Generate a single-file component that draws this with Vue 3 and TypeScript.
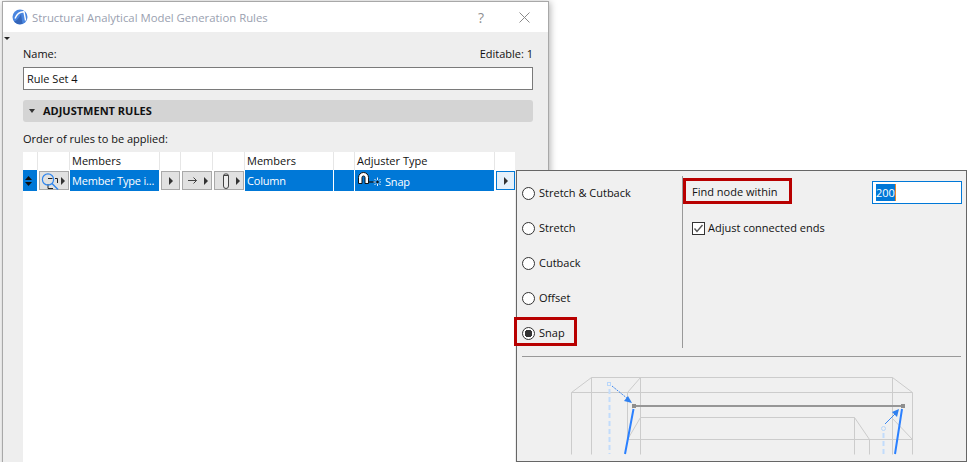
<script setup lang="ts">
const radios: { label: string; on?: boolean }[] = [
  { label: 'Stretch & Cutback' },
  { label: 'Stretch' },
  { label: 'Cutback' },
  { label: 'Offset' },
  { label: 'Snap', on: true },
]
// wireframe lines of the diagram, in diagram coordinates (origin = popup inner corner 517,357)
const ox = 517
const oy = 357
const wire: number[][] = [
  [571, 392, 571, 454], [591, 377, 591, 454], [640, 377, 640, 454], [627, 392, 627, 440],
  [591, 377, 892, 377], [571, 392, 912, 392], [640, 417, 854, 417], [627, 439, 912, 439],
  [571, 392, 591, 377], [627, 392, 640, 377], [627, 439, 640, 417],
  [892, 377, 892, 454], [912, 392, 912, 454], [854, 417, 854, 454], [869, 439, 869, 454],
  [892, 377, 912, 392], [854, 417, 869, 439], [892, 418, 912, 439],
].map(([a, b, c, d]) => [a - ox + 0.5, b - oy + 0.5, c - ox + 0.5, d - oy + 0.5])
</script>

<template>
  <div class="stage">
    <section class="dialog">
      <header class="titlebar">
        <svg class="logo" width="16" height="16" viewBox="0 0 16 16">
          <circle cx="8" cy="8" r="7.5" fill="#4a86e0" />
          <path d="M2 12.5 Q6 11.5 9 5 L10.5 14.8 Q5.5 16.2 2 12.5Z" fill="#3565b8" />
          <path d="M3 9.5 Q6 2.5 12 2.8 L13.6 11.5" fill="none" stroke="#fff" stroke-width="1.4" />
        </svg>
        <span class="title">Structural Analytical Model Generation Rules</span>
        <span class="help">?</span>
        <svg class="close" width="11" height="11" viewBox="0 0 11 11">
          <path d="M0.5 0.5L10.5 10.5M10.5 0.5L0.5 10.5" stroke="#8a8a8a" fill="none" />
        </svg>
      </header>
      <div class="body">
        <i class="corner"></i>
        <div class="name-row"><span>Name:</span><span>Editable: 1</span></div>
        <div class="name-input">Rule Set 4</div>
        <div class="section"><i class="tri-down"></i><b>ADJUSTMENT RULES</b></div>
        <div class="order">Order of rules to be applied:</div>
        <div class="table">
          <div class="grid head">
            <div></div><div></div><div class="h">Members</div><div></div><div></div><div></div>
            <div class="h">Members</div><div></div><div class="h">Adjuster Type</div><div></div>
          </div>
          <div class="grid row">
            <div class="blue sort">
              <svg width="7" height="10" viewBox="0 0 7 10"><path d="M3.5 0L7 4H0ZM0 6H7L3.5 10Z" fill="#111" /></svg>
            </div>
            <button class="btn">
              <svg width="22" height="19" viewBox="0 0 22 19">
                <path d="M8 6.5H12.5M15 6.5H17.5V11M8 16.5H13M8 12V16.5" fill="none" stroke="#222" />
                <circle cx="8" cy="7.5" r="5.6" fill="none" stroke="#2f86ee" stroke-width="1.2" />
                <path d="M12 11.5L18 17.5" stroke="#2f86ee" stroke-width="1.4" />
              </svg>
              <i class="tri"></i>
            </button>
            <div class="blue cell">Member Type i...</div>
            <button class="btn center"><i class="tri"></i></button>
            <button class="btn">
              <svg class="gl" width="10" height="7" viewBox="0 0 10 7"><path d="M0 3.5H8.5M5.5 0.5L8.5 3.5L5.5 6.5" fill="none" stroke="#444" /></svg>
              <i class="tri"></i>
            </button>
            <button class="btn">
              <svg class="gc" width="8" height="16" viewBox="0 0 8 16"><path d="M1.5 2.5H6.5V13A2.5 2.5 0 0 1 1.5 13ZM1.5 2.5A2.5 1.6 0 0 1 6.5 2.5" fill="#eee" stroke="#444" /></svg>
              <i class="tri"></i>
            </button>
            <div class="blue cell">Column</div>
            <div class="blue"></div>
            <div class="blue cell adj">
              <svg width="24" height="17" viewBox="0 0 24 17">
                <path d="M1.5 11.5V5.5A5 5 0 0 1 11.5 5.5V11.5H8V5.5A1.5 1.5 0 0 0 5 5.5V11.5Z" fill="#fff" stroke="#111" />
                <path d="M12 10H18" stroke="#111" stroke-width="1.2" />
                <path d="M20.5 5.5V8M20.5 11.5V14M16.5 10H18.5M22.5 10H24M17.5 7L19 8.5M23.5 7L22 8.5M17.5 13L19 11.5M23.5 13L22 11.5" stroke="#e8eef8" />
                <circle cx="20.5" cy="10" r="1.2" fill="#111" />
              </svg>
              <span>Snap</span>
            </div>
            <button class="btn active center"><i class="tri"></i></button>
          </div>
        </div>
      </div>
    </section>

    <aside class="popup">
      <div class="top">
        <div class="left">
          <label v-for="r in radios" :key="r.label" class="radio">
            <i class="dot" :class="{ on: r.on }"></i>
            <span class="lbl">{{ r.label }}</span>
            <i v-if="r.on" class="mark"></i>
          </label>
        </div>
        <div class="right">
          <div class="find-row">
            <span class="find">Find node within</span>
            <div class="num"><span class="sel">200</span></div>
          </div>
          <div class="check-row">
            <svg width="13" height="13" viewBox="0 0 13 13">
              <rect x="0.5" y="0.5" width="12" height="12" fill="#fff" stroke="#333" />
              <path d="M2.5 6.5L5 9.5L10.5 3" fill="none" stroke="#555" stroke-width="1.4" />
            </svg>
            <span class="lbl">Adjust connected ends</span>
          </div>
        </div>
      </div>
      <div class="rule"></div>
      <svg class="diagram" width="449" height="104" viewBox="0 0 449 104">
        <line v-for="(l, i) in wire" :key="i" :x1="l[0]" :y1="l[1]" :x2="l[2]" :y2="l[3]" stroke="#cccccc" />
        <path d="M92.5 32V97M366.5 76V97" stroke="#c2dcfb" stroke-width="2" stroke-dasharray="5 3" fill="none" />
        <rect x="90.5" y="25.5" width="3" height="3" fill="#f0f0f0" stroke="#b8d6fa" />
        <circle cx="366.5" cy="71.5" r="2" fill="#f0f0f0" stroke="#b8d6fa" />
        <path d="M95 29L111 42" stroke="#3b87f0" stroke-dasharray="2 1" />
        <path d="M115 46L107 44L111 39Z" fill="#2f80f0" />
        <path d="M368 67L379 56" stroke="#3b87f0" />
        <path d="M382 52L380 60L375 55Z" fill="#2f80f0" />
        <path d="M117 49H386" stroke="#969696" stroke-width="2" />
        <rect x="115" y="47" width="4" height="4" fill="#8e8e8e" />
        <rect x="384" y="47" width="4" height="4" fill="#8e8e8e" />
        <path d="M116.5 52L108 97M385 52L378 97" stroke="#2b80ff" stroke-width="2" fill="none" />
      </svg>
    </aside>
  </div>
</template>

<style>
html, body { margin: 0; background: #fff; }
</style>

<style scoped>
.stage {
  position: relative;
  width: 971px;
  height: 462px;
  overflow: hidden;
  background: #fff;
  font-family: "Open Sans", "Noto Sans", sans-serif;
  font-size: 11px;
  color: #111;
}
.dialog {
  position: absolute;
  left: 2px;
  top: 1px;
  width: 547px;
  height: 470px;
  box-sizing: border-box;
  border: 1px solid #a8a8a8;
  background: #eee;
  box-shadow: 1px 1px 7px rgba(0, 0, 0, 0.32);
}
.titlebar {
  display: flex;
  align-items: center;
  height: 30px;
  background: #fff;
}
.logo { margin-left: 9px; }
.title { margin-left: 4px; color: #9a9fb0; font-size: 11.35px; }
.help { margin-left: auto; color: #8f8f8f; font-size: 14px; }
.close { margin: 0 18px 0 35px; }
.body { position: relative; padding: 0 15px 0 20px; }
.corner {
  position: absolute;
  left: 1px;
  top: 5px;
  border: 3px solid transparent;
  border-top: 3px solid #222;
  border-bottom: 0;
}
.name-row {
  display: flex;
  justify-content: space-between;
  height: 35px;
  line-height: 44px;
}
.name-input {
  box-sizing: border-box;
  height: 23px;
  line-height: 21px;
  padding-left: 3px;
  border: 1px solid #7a7a7a;
  background: #fff;
}
.section {
  display: flex;
  align-items: center;
  height: 22px;
  margin-top: 10px;
  padding-left: 6px;
  background: #d4d4d4;
  border-radius: 3px;
}
.section b { margin: 0 0 2px 8px; font-weight: 700; }
.tri-down {
  width: 0;
  height: 0;
  border: 3.5px solid transparent;
  border-top: 4px solid #333;
  border-bottom: 0;
}
.order { height: 30px; line-height: 34px; }
.table {
  width: 492px;
  height: 320px;
  background: #fff;
}
.grid {
  display: grid;
  grid-template-columns: 14px 31px 89px 20px 31px 31px 88px 20px 139px 20px;
  column-gap: 1px;
}
.head { height: 18px; background: #e6e6e6; }
.head > div { background: #fff; }
.h { padding-left: 2px; line-height: 18px; }
.row { height: 21px; column-gap: 1px; }
.blue { background: #0078d7; color: #fff; }
.sort { display: flex; align-items: center; justify-content: center; padding-right: 3px; }
.cell {
  padding-left: 2px;
  line-height: 22px;
  font-weight: 500;
  letter-spacing: -0.2px;
  white-space: nowrap;
  overflow: hidden;
}
.adj { display: flex; align-items: center; padding-left: 2px; }
.adj span { margin: 2px 0 0 4px; }
.btn {
  display: flex;
  align-items: center;
  justify-content: flex-end;
  box-sizing: border-box;
  margin: 1px 0 1px 1px;
  padding: 0 3px 0 0;
  border: 1px solid #a9a9a9;
  background: #e1e1e1;
  position: relative;
}
.btn.center { justify-content: center; padding: 0; }
.btn.active { background: #e5f1fb; border-color: #0078d7; }
.btn > svg { position: absolute; left: 0; top: 0; }
.btn > .gl { left: 5px; top: 5px; }
.btn > .gc { left: 7px; top: 1px; }
.tri {
  width: 0;
  height: 0;
  border: 4px solid transparent;
  border-left: 4px solid #333;
  border-right: 0;
}
.popup {
  position: absolute;
  left: 516px;
  top: 170px;
  width: 451px;
  height: 292px;
  box-sizing: border-box;
  border: 1px solid #666;
  background: #f0f0f0;
}
.top { display: flex; height: 172px; margin-top: 5px; }
.left { width: 165px; border-right: 1px solid #999; }
.radio {
  position: relative;
  display: flex;
  align-items: center;
  height: 35px;
  padding-left: 5px;
}
.dot {
  box-sizing: border-box;
  width: 13px;
  height: 13px;
  margin-right: 4px;
  border: 1px solid #333;
  border-radius: 50%;
  background: #fff;
}
.dot.on { background: radial-gradient(circle, #333 0 3.6px, #fff 4px); }
.lbl { margin-bottom: 2px; }
.mark {
  position: absolute;
  left: -3px;
  top: 1px;
  width: 63px;
  height: 29px;
  box-sizing: border-box;
  border: 3px solid #b80000;
}
.right { flex: 1; padding: 2px 4px 0 0; }
.find-row { display: flex; justify-content: space-between; align-items: flex-end; }
.find {
  box-sizing: border-box;
  width: 109px;
  height: 26px;
  padding-left: 6px;
  line-height: 22px;
  border: 3px solid #b80000;
  white-space: nowrap;
}
.num {
  box-sizing: border-box;
  width: 90px;
  height: 23px;
  padding: 2px 3px;
  border: 1px solid #0078d7;
  background: #fff;
  line-height: 17px;
}
.sel { display: inline-block; background: #0078d7; color: #fff; border-right: 1px solid #e8862a; }
.check-row {
  display: flex;
  align-items: center;
  gap: 3px;
  height: 20px;
  margin: 14px 0 0 9px;
}
.rule { height: 1px; margin: 8px 5px 0; background: #999; }
.diagram { display: block; }
</style>
